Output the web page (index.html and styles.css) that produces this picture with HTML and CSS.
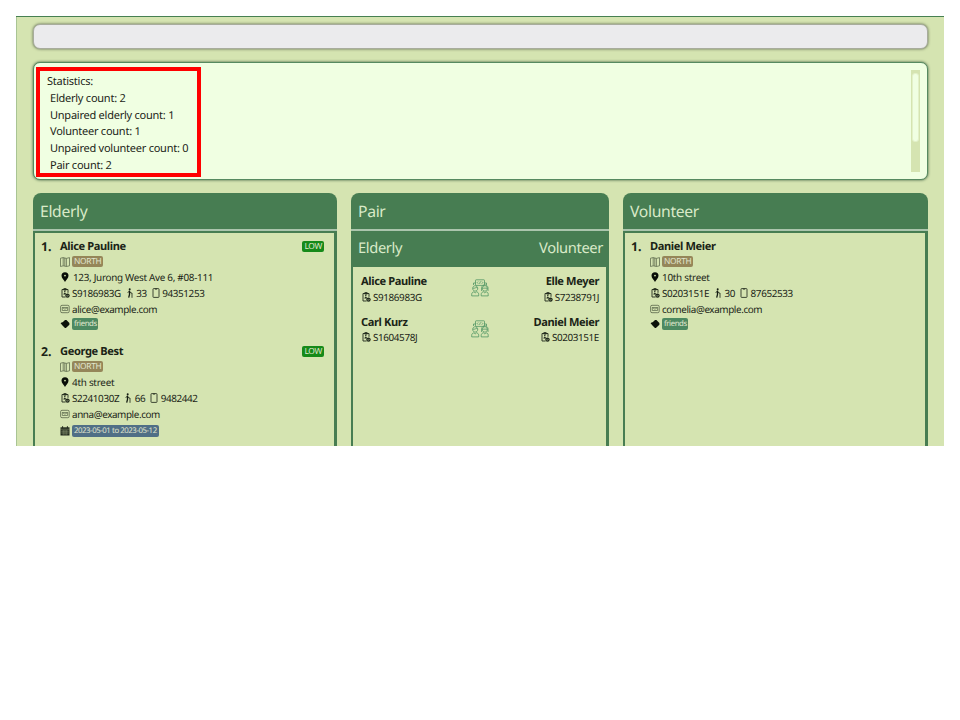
FILE: index.html
```html
<!DOCTYPE html>
<html lang="en">
<head>
<meta charset="utf-8">
<title>Elderly and volunteers</title>
<link rel="stylesheet" href="styles.css">
</head>
<body>
<svg class="defs" aria-hidden="true">
  <symbol id="map" viewBox="0 0 10 10"><path d="M.5 1.200 3.200.6v8.200L.5 9.500zM3.200.6l3.200.8v8.100l-3.200-.7M6.400 1.400 9.500.6v8.200l-3.100.7M4.800 1v8" fill="none" stroke="#59654a" stroke-width=".75"/></symbol>
  <symbol id="pin" viewBox="0 0 10 10"><path fill-rule="evenodd" d="M5 .2a3.500 3.500 0 0 0-3.500 3.500C1.500 6 4 7.800 5 10c1-2.200 3.500-4 3.500-6.300A3.500 3.500 0 0 0 5 .2zm0 2.500a.9.9 0 1 1 0 1.800.9.9 0 0 1 0-1.800z" fill="#080d07"/></symbol>
  <symbol id="badge" viewBox="0 0 10 10"><path d="M5.500 9H2V1.500h6v3.300M3.800.6h2.400v1.500H3.800z" fill="none" stroke="#20291c" stroke-width=".9"/><circle cx="4.800" cy="3.800" r=".8" fill="#20291c"/><path d="M3.400 6.500c0-2 2.800-2 2.800 0z" fill="#20291c"/><circle cx="7.500" cy="7.600" r="2.200" fill="#20291c"/><path d="m6.500 7.600.8.7 1.300-1.400" fill="none" stroke="#d5e4b1" stroke-width=".6"/></symbol>
  <symbol id="walk" viewBox="0 0 10 10"><circle cx="4.700" cy="1.200" r="1" fill="#151d12"/><path d="M4.500 2.500v3.800L3.700 9.700" fill="none" stroke="#151d12" stroke-width="1.300"/><path d="M2.700 4.900 4.300 3l1.500 2h1.200v4.800" fill="none" stroke="#151d12" stroke-width=".8"/></symbol>
  <symbol id="phone" viewBox="0 0 10 10"><rect x="2" y=".6" width="6" height="8.800" rx=".6" fill="none" stroke="#2c3526" stroke-width=".9"/><path d="M4 1h2" stroke="#2c3526"/></symbol>
  <symbol id="mail" viewBox="0 0 10 10"><rect x=".6" y="1.300" width="8.600" height="7.400" rx="1.400" fill="none" stroke="#59654a" stroke-width=".8"/><path d="M2.300 3.500h5.300v3H2.300zl2.650 1.700L7.600 3.500" fill="none" stroke="#59654a" stroke-width=".7"/></symbol>
  <symbol id="tag" viewBox="0 0 10 10"><path d="M.6 4.300 2 3.200h.7L5 1h1.400l3 3.100v1.700L5.900 9.100H5L2.700 6.700z" fill="#0c120a"/></symbol>
  <symbol id="calendar" viewBox="0 0 10 10"><path d="M.5 1.300h9v8.200h-9z" fill="#20291c"/><path d="M.5 3.200h9M1.200 5.200h7.600M1.200 7h7.600M3.200 4v5M5 4v5M6.800 4v5" stroke="#b9c79a" stroke-width=".4"/><path d="M2.600.2v2M7.400.2v2" stroke="#20291c" stroke-width="1"/></symbol>
  <symbol id="people" viewBox="0 0 18 18"><g fill="none" stroke="#4a9260" stroke-width=".75"><rect x="4.500" y=".8" width="9" height="5.600" rx=".6"/><path d="M7.200 2.500 6.200 3.600l1 1.100M10.800 2.500l1 1.100-1 1.100M9.400 2.300l-.8 2.600M4.500 4H2.500v2M13.500 4h2v2"/><path d="M1.700 9.500c0-3.700 5-3.700 5 0 0 3.400-5 3.400-5 0zM1.700 9.200c1.800.2 3-.3 3.600-1 .4.700.8 1 1.400 1M.7 16.900v-1.700c0-1.500 1.300-2.300 2.300-2.400l1.200 1.100 1.200-1.100c1 .1 2.300.9 2.300 2.400v1.700z"/><path d="M11.300 9.500c0-3.700 5-3.700 5 0 0 3.400-5 3.400-5 0zM10.600 12V8.600c.6-3.600 5.800-3.600 6.400 0V12M11.300 9.200c2 .2 3.500-.4 5 0M10.200 16.900v-1.700c0-1.500 1.200-2.300 2.400-2.400l1.200 1.100 1.200-1.100c1.200.1 2.200.9 2.200 2.400v1.700z"/></g></symbol>
</svg>
<main class="app">
  <div class="command"></div>
  <section class="result">
    <div class="stats">
      <div>Statistics:</div>
      <div class="count">Elderly count: 2</div>
      <div class="count">Unpaired elderly count: 1</div>
      <div class="count">Volunteer count: 1</div>
      <div class="count">Unpaired volunteer count: 0</div>
      <div class="count">Pair count: 2</div>
    </div>
    <div class="scroll"><div class="thumb"></div></div>
  </section>
  <div class="columns">
    <section class="column">
      <h2>Elderly</h2>
      <div class="list">
        <article class="person">
          <b class="index">1.</b>
          <div class="details">
            <div class="row name">Alice Pauline <span class="chip low">LOW</span></div>
            <div class="row"><svg><use href="#map"/></svg><span class="chip region">NORTH</span></div>
            <div class="row"><svg><use href="#pin"/></svg><span class="address">123, Jurong West Ave 6, #08-111</span></div>
            <div class="row ids"><svg><use href="#badge"/></svg><span>S9186983G</span><svg class="next"><use href="#walk"/></svg><span class="age">33</span><svg class="next"><use href="#phone"/></svg><span class="age">94351253</span></div>
            <div class="row mail"><svg><use href="#mail"/></svg><span>alice@example.com</span></div>
            <div class="row"><svg><use href="#tag"/></svg><span class="chip friend">friends</span></div>
          </div>
        </article>
        <article class="person">
          <b class="index">2.</b>
          <div class="details">
            <div class="row name">George Best <span class="chip low">LOW</span></div>
            <div class="row"><svg><use href="#map"/></svg><span class="chip region">NORTH</span></div>
            <div class="row"><svg><use href="#pin"/></svg><span>4th street</span></div>
            <div class="row ids"><svg><use href="#badge"/></svg><span>S2241030Z</span><svg class="next"><use href="#walk"/></svg><span class="age">66</span><svg class="next"><use href="#phone"/></svg><span class="age">9482442</span></div>
            <div class="row mail"><svg><use href="#mail"/></svg><span>anna@example.com</span></div>
            <div class="row dates"><svg><use href="#calendar"/></svg><span class="chip date">2023-05-01 to 2023-05-12</span></div>
          </div>
        </article>
      </div>
    </section>
    <section class="column">
      <h2>Pair</h2>
      <div class="list pairs">
        <div class="pairhead"><span>Elderly</span><span>Volunteer</span></div>
        <div class="pair">
          <div class="side"><b>Alice Pauline</b><div class="nric"><svg><use href="#badge"/></svg>S9186983G</div></div>
          <svg class="people"><use href="#people"/></svg>
          <div class="side right"><b>Elle Meyer</b><div class="nric"><svg><use href="#badge"/></svg>S7238791J</div></div>
        </div>
        <div class="pair">
          <div class="side"><b>Carl Kurz</b><div class="nric"><svg><use href="#badge"/></svg>S1604578J</div></div>
          <svg class="people"><use href="#people"/></svg>
          <div class="side right"><b>Daniel Meier</b><div class="nric"><svg><use href="#badge"/></svg>S0203151E</div></div>
        </div>
      </div>
    </section>
    <section class="column">
      <h2>Volunteer</h2>
      <div class="list">
        <article class="person">
          <b class="index">1.</b>
          <div class="details">
            <div class="row name">Daniel Meier</div>
            <div class="row"><svg><use href="#map"/></svg><span class="chip region">NORTH</span></div>
            <div class="row"><svg><use href="#pin"/></svg><span>10th street</span></div>
            <div class="row ids"><svg><use href="#badge"/></svg><span>S0203151E</span><svg class="next"><use href="#walk"/></svg><span class="age">30</span><svg class="next"><use href="#phone"/></svg><span class="age">87652533</span></div>
            <div class="row mail"><svg><use href="#mail"/></svg><span>cornelia@example.com</span></div>
            <div class="row"><svg><use href="#tag"/></svg><span class="chip friend">friends</span></div>
          </div>
        </article>
      </div>
    </section>
  </div>
</main>
<div class="highlight"></div>
</body>
</html>
```
FILE: styles.css
```css
* { box-sizing: border-box; }
body {
  margin: 0;
  padding: 16px;
  background: #fff;
  color: #1b2417;
  font-family: "Noto Sans", "Open Sans", sans-serif;
  font-size: 9.9px;
  letter-spacing: -.25px;
  text-rendering: geometricPrecision;
}
.defs { position: absolute; width: 0; height: 0; }
.app {
  display: flex;
  flex-direction: column;
  height: 430px;
  padding: 7px 16px 0 17px;
  overflow: hidden;
  background: #d5e4b1;
  border-top: 1px solid #478052;
  box-shadow: inset 1px 0 #a9c494;
}
.command {
  flex: none;
  height: 25px;
  background: #ebebed;
  border: 1px solid #a8ac9d;
  border-radius: 7px;
  box-shadow: 0 0 3px #56624a;
}
.result {
  display: flex;
  flex: none;
  justify-content: space-between;
  height: 118px;
  margin-top: 13px;
  padding: 7px 7px 0 13px;
  background: #f0ffe2;
  border: 1px solid #568a60;
  border-radius: 7px;
  box-shadow: 0 0 3px #35563b;
}
.stats { padding-top: 4px; font-size: 11px; line-height: 16.8px; letter-spacing: -.24px; }
.count { padding-left: 3px; }
.scroll { width: 9px; height: 102px; padding: 3px 1px; background: #d5e4b1; }
.thumb { height: 69px; background: #f0ffe2; border: 1px solid #e3f1c9; border-radius: 3px; }
.columns { display: grid; flex: 1; grid-template-columns: 304px 258px 305px; gap: 14px; margin-top: 13px; }
.column { display: flex; flex-direction: column; }
h2 {
  height: 38px;
  margin: 0;
  padding: 0 7px;
  background: #477d52;
  border-bottom: 2px solid #abc5ad;
  border-radius: 8px 8px 0 0;
  color: #d9eac8;
  font-size: 15.7px;
  font-weight: 400;
  line-height: 36px;
  letter-spacing: -.33px;
}
.list { flex: 1; padding: 5px 10px 0 6px; border: solid #477d52; border-width: 2px 3px 0 2px; }
.person { display: flex; height: 105px; }
.index { width: 19px; font-size: 12.3px; line-height: 18px; letter-spacing: 0; }
.details { flex: 1; }
.row { display: flex; align-items: center; height: 15.6px; white-space: nowrap; }
.row svg, .nric svg { flex: none; width: 10px; height: 10px; margin-right: 2px; }
.address { padding-left: 1px; letter-spacing: -.29px; }
.ids { letter-spacing: -.38px; }
.mail { letter-spacing: -.4px; }
.name { justify-content: space-between; height: 16px; font-size: 11.1px; font-weight: 700; letter-spacing: -.38px; }
.dates { height: 19px; }
.chip { height: 11px; padding: 0 2px; border-radius: 2px; color: #e1e7cf; font-size: 8.4px; font-weight: 400; line-height: 11px; letter-spacing: -.3px; }
.low { background: #168a19; }
.region { background: #958659; }
.friend { width: 26px; height: 12px; background: #4d8961; font-size: 7.8px; line-height: 12px; letter-spacing: -.42px; }
.date { height: 12px; background: #506f86; font-size: 7.8px; line-height: 12px; letter-spacing: -.43px; }
.row .next { margin-left: 4px; }
.age { margin-left: -.5px; }
.pairs { padding: 0; border-top: 0; }
.pairhead { display: flex; justify-content: space-between; height: 36px; padding: 0 3px 0 5px; background: #477d52; color: #d9eac8; font-size: 14.7px; line-height: 34px; letter-spacing: -.37px; }
.pair { display: grid; grid-template-columns: 1fr 18px 1fr; height: 40.5px; padding: 6px 7px 0 8px; }
.side b { display: block; font-size: 11.1px; line-height: 17px; letter-spacing: -.38px; }
.nric { display: flex; align-items: center; height: 13px; letter-spacing: -.38px; }
.right { text-align: right; }
.right .nric { justify-content: flex-end; }
.people { width: 18px; height: 18px; margin-top: 6px; }
.highlight { position: absolute; top: 67px; left: 36px; width: 165px; height: 110px; border: 4px solid #f00; }
```
